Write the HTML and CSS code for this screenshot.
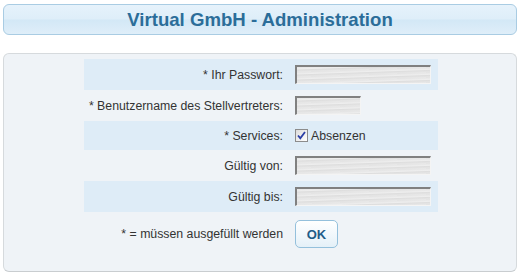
FILE: index.html
```html
<!DOCTYPE html>
<html lang="de">
<head>
<meta charset="utf-8">
<title>Virtual GmbH - Administration</title>
<link rel="stylesheet" href="styles.css">
</head>
<body>
<div class="page">
  <div class="header"><h1 class="title">Virtual GmbH - Administration</h1></div>
  <div class="panel">
    <div class="form">
      <div class="row alt">
        <div class="label">* Ihr Passwort:</div>
        <div class="field"><span class="input wide"></span></div>
      </div>
      <div class="row">
        <div class="label">* Benutzername des Stellvertreters:</div>
        <div class="field"><span class="input narrow"></span></div>
      </div>
      <div class="row alt short">
        <div class="label">* Services:</div>
        <div class="field"><span class="check"><svg width="11" height="11" viewBox="0 0 11 11"><path d="M2 5.5 L4.3 8.2 L9 2" fill="none" stroke="#2b3fa6" stroke-width="1.8"/></svg></span><span class="check-label">Absenzen</span></div>
      </div>
      <div class="row">
        <div class="label">Gültig von:</div>
        <div class="field"><span class="input wide"></span></div>
      </div>
      <div class="row alt">
        <div class="label">Gültig bis:</div>
        <div class="field"><span class="input wide"></span></div>
      </div>
      <div class="row last">
        <div class="label">* = müssen ausgefüllt werden</div>
        <div class="field"><span class="button">OK</span></div>
      </div>
    </div>
  </div>
</div>
</body>
</html>
```
FILE: styles.css
```css
html, body {
  margin: 0;
  padding: 0;
  background: #ffffff;
}
.page {
  padding: 4px 6px 0 3px;
  font-family: "Liberation Sans", Arial, sans-serif;
  font-size: 12.3px;
  color: #333333;
}
.header {
  height: 29px;
  border: 1px solid #a9cce3;
  border-radius: 6px;
  background: linear-gradient(#e6f2fb 0%, #deeef9 48%, #d3e8f6 52%, #dfeef9 100%);
  display: flex;
  align-items: center;
  justify-content: center;
}
.title {
  margin: 0;
  font-size: 18.6px;
  font-weight: bold;
  color: #2b6d99;
  line-height: 20px;
  padding-top: 1px;
}
.panel {
  margin-top: 18px;
  border: 1px solid #d6dadd;
  border-bottom-color: #c9cdd0;
  border-radius: 6px;
  background: #eff3f7;
  padding-top: 5px;
  box-sizing: border-box;
  height: 219px;
}
.form {
  width: 354px;
  margin: 0 auto;
  position: relative;
  left: 1px;
}
.row {
  display: grid;
  grid-template-columns: 199px 1fr;
  column-gap: 12px;
  align-items: center;
  height: 31px;
}
.row.short {
  height: 29px;
}
.row.alt {
  background: #deecf7;
}
.row.last {
  height: 40px;
  padding-top: 2px;
}
.label {
  text-align: right;
  white-space: nowrap;
}
.field {
  display: flex;
  align-items: center;
}
.input {
  display: block;
  height: 19px;
  box-sizing: border-box;
  border-top: 2px solid #808080;
  border-left: 2px solid #808080;
  border-right: 1px solid #f4f4f4;
  border-bottom: 1px solid #f4f4f4;
  background: repeating-linear-gradient(178deg, #e4e4e4 0px, #eeeeee 2px, #dedede 3px, #e8e8e8 5px);
}
.input.wide { width: 136px; }
.input.narrow { width: 66px; }
.check {
  width: 13px;
  height: 13px;
  box-sizing: border-box;
  border: 1px solid #8c8c8c;
  background: linear-gradient(135deg, #dcdcdc, #ffffff);
  display: flex;
  align-items: center;
  justify-content: center;
  margin-right: 3px;
}
.check svg { display: block; }
.check-label {
  font-size: 12.3px;
}
.button {
  display: flex;
  align-items: center;
  justify-content: center;
  width: 43px;
  height: 28px;
  box-sizing: border-box;
  border: 1px solid #94c0dc;
  border-radius: 5px;
  background: linear-gradient(#ffffff 0%, #f2f8fc 50%, #e4f0f8 100%);
  color: #1f5d88;
  font-weight: bold;
  font-size: 13px;
}
```
